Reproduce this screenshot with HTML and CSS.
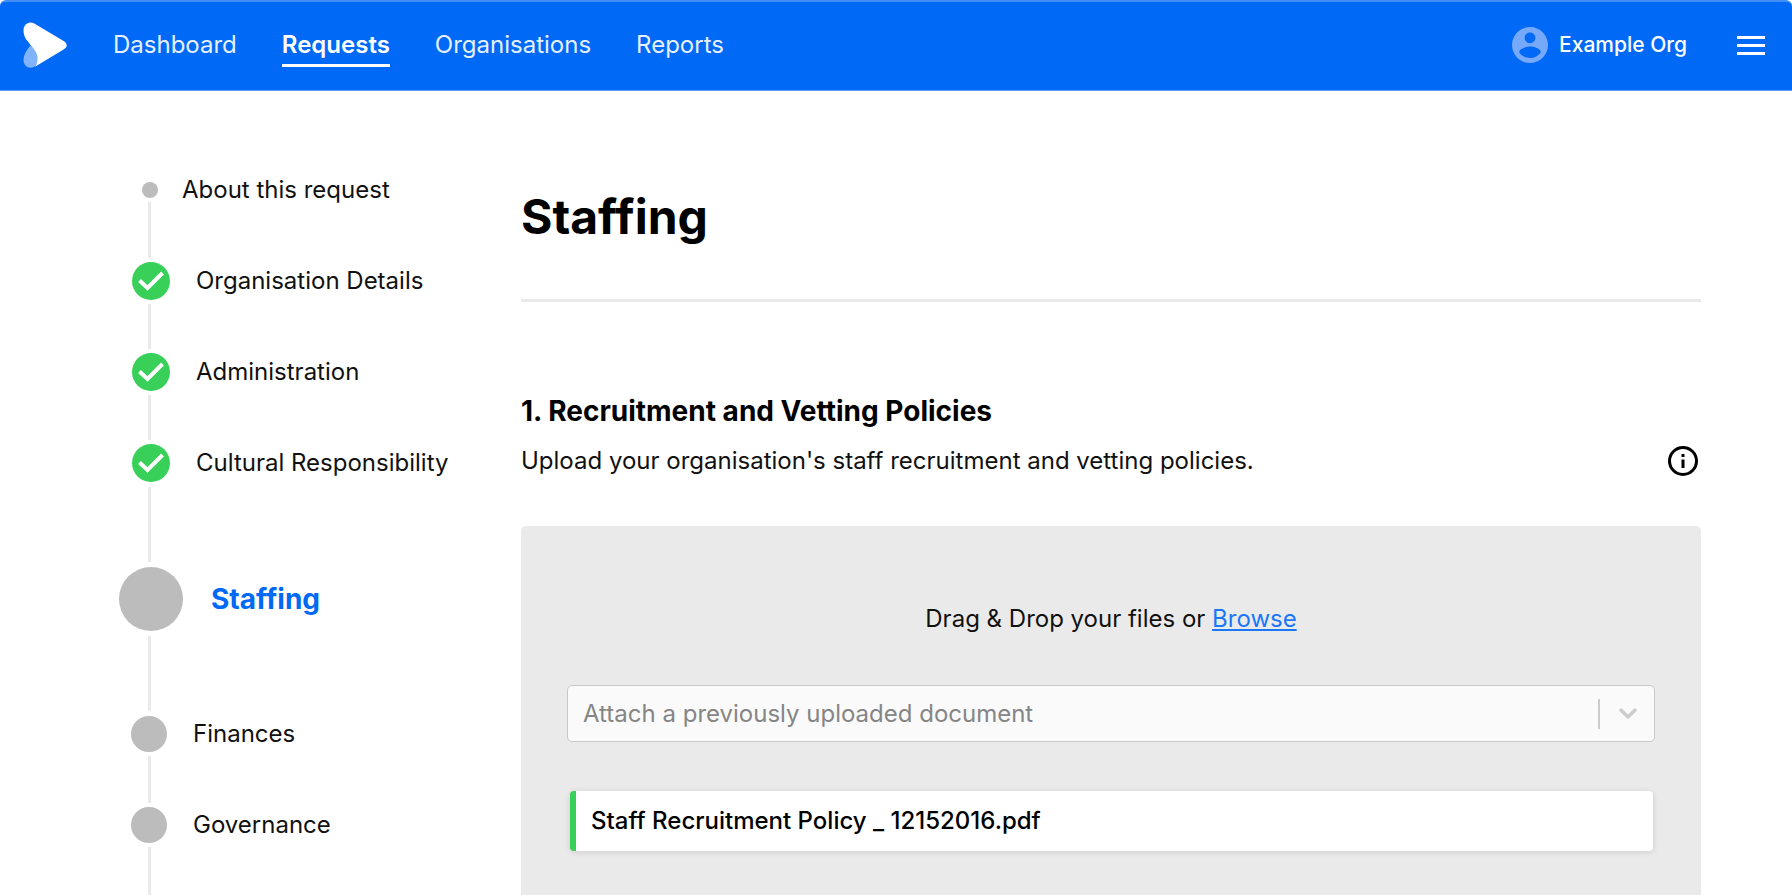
FILE: index.html
```html
<!DOCTYPE html>
<html lang="en">
<head>
<meta charset="utf-8">
<title>Staffing</title>
<link rel="stylesheet" href="styles.css">
</head>
<body>
<header class="topbar">
  <a class="logo" href="#" aria-label="Home">
    <svg width="44" height="46" viewBox="0 0 44 46" aria-hidden="true">
      <path fill="#80b3fa" d="M7.500 23.500C3.500 28 0.500 33 0.500 38c0 4.500 3 7.700 7.200 7.700 5 0 8.300-5 7.300-11.500-.7-4-3.500-7.500-7.500-10.700z"/>
      <path fill="#fff" d="M.5 8.200C.5 2 6.500-1.200 11.300 1.500L41 19.200c3.600 2.200 3.600 5.800 0 8L12 44.800c3.500-5.300 3.700-11.600-.8-17.300L3.800 18.200C1.500 15.300.5 12 .5 8.200z"/>
    </svg>
  </a>
  <nav class="nav">
    <a class="nav-link" href="#">Dashboard</a>
    <a class="nav-link nav-link-active" href="#" aria-current="page">Requests</a>
    <a class="nav-link" href="#">Organisations</a>
    <a class="nav-link" href="#">Reports</a>
  </nav>
  <a class="account" href="#">
    <svg width="36" height="36" viewBox="2 2 20 20" aria-hidden="true">
      <path fill="#76a9fa" d="M12 2C6.480 2 2 6.480 2 12s4.480 10 10 10 10-4.480 10-10S17.520 2 12 2zm0 3c1.660 0 3 1.340 3 3s-1.340 3-3 3-3-1.340-3-3 1.340-3 3-3zm0 14.200c-2.500 0-4.710-1.280-6-3.220.030-1.990 4-3.080 6-3.080 1.990 0 5.970 1.090 6 3.080-1.290 1.940-3.500 3.220-6 3.220z"/>
    </svg>
    <span>Example Org</span>
  </a>
  <button class="menu" type="button" aria-label="Menu">
    <svg width="28" height="19" viewBox="0 0 28 19" aria-hidden="true">
      <path fill="#fff" d="M0 0h28v3H0zM0 8h28v3H0zM0 16h28v3H0z"/>
    </svg>
  </button>
</header>

<div class="page">
  <ol class="steps">
    <li class="step">
      <a class="step-row step-small" href="#"><span class="marker"></span>About this request</a>
      <span class="line line-first"></span>
    </li>
    <li class="step">
      <a class="step-row step-done" href="#"><span class="marker"><svg width="26" height="20" viewBox="0 0 26 20" aria-hidden="true"><path fill="none" stroke="#fff" stroke-width="4" d="M1.500 9.500L9.500 17 24.500 2"/></svg></span>Organisation Details</a>
      <span class="line"></span>
    </li>
    <li class="step">
      <a class="step-row step-done" href="#"><span class="marker"><svg width="26" height="20" viewBox="0 0 26 20" aria-hidden="true"><path fill="none" stroke="#fff" stroke-width="4" d="M1.500 9.500L9.500 17 24.500 2"/></svg></span>Administration</a>
      <span class="line"></span>
    </li>
    <li class="step">
      <a class="step-row step-done" href="#"><span class="marker"><svg width="26" height="20" viewBox="0 0 26 20" aria-hidden="true"><path fill="none" stroke="#fff" stroke-width="4" d="M1.500 9.500L9.500 17 24.500 2"/></svg></span>Cultural Responsibility</a>
      <span class="line line-long"></span>
    </li>
    <li class="step">
      <a class="step-row step-current" href="#" aria-current="step"><span class="marker"></span>Staffing</a>
      <span class="line line-long"></span>
    </li>
    <li class="step">
      <a class="step-row" href="#"><span class="marker"></span>Finances</a>
      <span class="line line-pending"></span>
    </li>
    <li class="step step-last">
      <a class="step-row" href="#"><span class="marker"></span>Governance</a>
      <span class="line line-last"></span>
    </li>
  </ol>

  <main class="content">
    <h1 class="title">Staffing</h1>
    <section class="question">
      <h2 class="question-title">1. Recruitment and Vetting Policies</h2>
      <div class="question-row">
        <p class="question-text">Upload your organisation's staff recruitment and vetting policies.</p>
        <button class="info" type="button" aria-label="More information">
          <svg width="30" height="30" viewBox="0 0 30 30" aria-hidden="true">
            <circle cx="15" cy="15" r="13.500" fill="none" stroke="#000" stroke-width="3"/>
            <path d="M13.500 8h3v3h-3zM13.500 13.500h3V22h-3z"/>
          </svg>
        </button>
      </div>
      <div class="dropzone">
        <p class="drop-text">Drag &amp; Drop your files or <a class="browse" href="#">Browse</a></p>
        <div class="picker">
          <select class="picker-select" aria-label="Attach a previously uploaded document">
            <option>Attach a previously uploaded document</option>
          </select>
          <span class="picker-arrow">
            <svg width="18" height="11" viewBox="0 0 18 11" aria-hidden="true"><path fill="none" stroke="#ccc" stroke-width="3.500" stroke-linecap="round" stroke-linejoin="round" d="M2 2l7 7 7-7"/></svg>
          </span>
        </div>
        <div class="file">Staff Recruitment Policy _ 12152016.pdf</div>
      </div>
    </section>
  </main>
</div>
</body>
</html>
```

FILE: styles.css
```css
* {
  box-sizing: border-box;
}

body {
  margin: 0;
  min-height: 100vh;
  display: flex;
  flex-direction: column;
  background: #fff;
  color: #111;
  font-family: Inter, "Liberation Sans", sans-serif;
  font-size: 24px;
  font-variant-ligatures: none;
  line-height: 32px;
}

h1, h2, p, ol {
  margin: 0;
  padding: 0;
}

a {
  color: inherit;
  text-decoration: none;
}

button {
  padding: 0;
  border: 0;
  background: none;
  display: flex;
  cursor: pointer;
}

.topbar {
  display: flex;
  align-items: center;
  height: 91px;
  padding: 0 27px 2px 23px;
  background: #0069f5;
  border-top: 2px solid #408ef6;
  border-bottom: 1px solid #5b9ffa;
  border-radius: 6px 6px 0 0;
  color: #fff;
}

.logo {
  display: flex;
  margin-right: 46px;
}

.nav {
  display: flex;
  gap: 45px;
  flex: 1;
}

.nav-link {
  padding: 6px 0 3px;
  border-bottom: 3px solid transparent;
  color: #e6f0fe;
}

.nav-link-active {
  border-color: #fff;
  color: #fff;
  font-weight: 600;
}

.account {
  display: flex;
  align-items: center;
  gap: 11px;
  margin-right: 50px;
  font-size: 21px;
  font-weight: 500;
}

.page {
  flex: 1;
  display: flex;
  padding: 0 91px 0 119px;
}

.steps {
  flex: 0 0 402px;
  display: flex;
  flex-direction: column;
  padding-top: 91px;
  list-style: none;
}

.step {
  display: flex;
  flex-direction: column;
}

.step-last {
  flex: 1;
}

.step-row {
  display: flex;
  align-items: center;
  gap: 26px;
  height: 36px;
  padding-left: 12px;
  white-space: nowrap;
}

.marker {
  display: flex;
  align-items: center;
  justify-content: center;
  width: 36px;
  height: 36px;
  border-radius: 50%;
  background: #bcbcbc;
}

.step-small {
  height: 16px;
  padding-left: 23px;
  gap: 24px;
}

.step-small .marker {
  width: 16px;
  height: 16px;
}

.step-done {
  height: 38px;
  padding-left: 13px;
}

.step-done .marker {
  width: 38px;
  height: 38px;
  background: #38d058;
}

.step-current {
  height: 64px;
  padding-left: 0;
  gap: 28px;
  color: #0069f5;
  font-size: 28px;
  font-weight: 700;
}

.step-current .marker {
  width: 64px;
  height: 64px;
}

.line {
  width: 3px;
  height: 45px;
  margin: 4px 0 4px 29px;
  background: #eaeaea;
}

.line-first {
  height: 56px;
}

.line-long {
  height: 75px;
  margin-top: 5px;
  margin-bottom: 5px;
}

.line-pending {
  height: 47px;
}

.line-last {
  flex: 1;
  margin-bottom: 0;
}

.content {
  flex: 1;
  min-width: 0;
  display: flex;
  flex-direction: column;
  color: #111;
}

.title {
  padding: 96px 0 52px;
  border-bottom: 3px solid #eaeaea;
  color: #000;
  font-size: 48px;
  font-weight: 700;
  line-height: 60px;
}

.question {
  flex: 1;
  display: flex;
  flex-direction: column;
  padding-top: 91px;
}

.question-title {
  color: #000;
  font-size: 28px;
  font-weight: 700;
  line-height: 36px;
}

.question-row {
  display: flex;
  align-items: center;
  justify-content: space-between;
  padding: 16px 3px 49px 0;
}

.dropzone {
  flex: 1;
  padding: 77px 46px 44px;
  background: #eaeaea;
  border-radius: 5px 5px 0 0;
}

.drop-text {
  text-align: center;
}

.browse {
  color: #1a78f8;
  text-decoration: underline;
}

.picker {
  display: grid;
  align-items: center;
  margin: 50px 0 49px;
}

.picker-select {
  grid-area: 1 / 1;
  width: 100%;
  height: 57px;
  padding: 0 80px 0 15px;
  appearance: none;
  border: 1px solid #c8c8c8;
  border-radius: 5px;
  background: #fafafa;
  color: #858585;
  font: inherit;
}

.picker-arrow {
  grid-area: 1 / 1;
  justify-self: end;
  display: flex;
  align-items: center;
  justify-content: center;
  width: 57px;
  height: 30px;
  border-left: 2px solid #ccc;
  pointer-events: none;
}

.file {
  margin: 0 2px 0 3px;
  padding: 14px 15px;
  border-left: 6px solid #38d058;
  border-radius: 4px;
  background: #fff;
  box-shadow: 0 1px 6px rgba(0, 0, 0, 0.12);
  color: #000;
  font-weight: 500;
}
```
